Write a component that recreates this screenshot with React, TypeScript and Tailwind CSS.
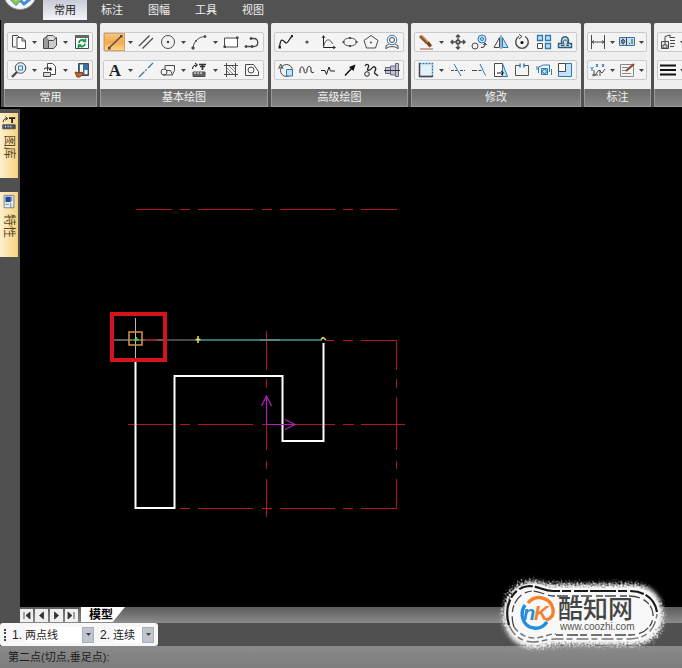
import React, { useState } from 'react';
import clsx from 'clsx';

interface Tool {
  name: string;
  art?: React.ReactNode;
  menu?: boolean;
  active?: boolean;
}

interface Group {
  title: string;
  width: string;
  rows: Tool[][];
}

const INK = '#4a4a4a';
const BLUE = '#2c7bb0';
const PALE = '#c4e2f3';

const tabs = ['常用', '标注', '图幅', '工具', '视图'];

const groups: Group[] = [
  {
    title: '常用',
    width: 'w-[93px]',
    rows: [
      [
        {
          name: '复制',
          menu: true,
          art: (
            <>
              <path d="M6 14H2.5V2.5h5l2 2" />
              <path d="M7 4.5h5l3.5 3.5v7.5H7z" fill="#fff" />
              <path d="M12 4.5V8h3.5" />
            </>
          ),
        },
        {
          name: '粘贴',
          menu: true,
          art: (
            <>
              <path d="M2.5 15.5V6l2-2h8v11.5z" fill="#999" />
              <path d="M6 4V2.5h6L14.5 5v8h-2" fill="#ddd" />
              <path d="M7.5 15.5v-8h5l3 -3v8l-3 3z" fill="#ccc" />
            </>
          ),
        },
        {
          name: '刷新',
          art: (
            <>
              <path d="M2.5 3.5h13v12h-13z" fill="#fff" />
              <path d="M2 3.5h14" strokeWidth="3" stroke="#666" />
              <path d="M6 10c0-3 4-4 6-2M12.5 5.5V8.5H9.5M12 10.5c0 3-4 4-6 2M5.5 15V12h3" stroke="#17984a" strokeWidth="1.6" />
            </>
          ),
        },
      ],
      [
        {
          name: '缩放',
          menu: true,
          art: (
            <>
              <circle cx="10.5" cy="7" r="5.3" fill="#e8eef2" />
              <path d="M8.5 5h4v4h-4z" stroke={BLUE} />
              <path d="M7 11l-5 5" strokeWidth="2.4" />
            </>
          ),
        },
        {
          name: '插入',
          menu: true,
          art: (
            <>
              <path d="M6.5 10V2.5h5l3 3v8H9" fill="#fff" />
              <path d="M2.5 11.5h7v4h-7z" fill="#ddd" />
              <path d="M3 8c2-1.5 5-1.5 7 0" stroke="#111" />
              <path d="M11 9.5l-3.5-.5 2.5-3z" fill="#111" stroke="none" />
            </>
          ),
        },
        {
          name: '格式刷',
          art: (
            <>
              <path d="M5.5 2.5h10v12h-10z" fill="#3b6fa5" />
              <path d="M7 3.5h3v8H7zM11.5 9h3v4h-3z" fill="#fff" stroke="none" />
              <path d="M2 11l4 1 3-1 1 2-3 3H4z" fill="#c8642a" stroke="#8b3d12" />
            </>
          ),
        },
      ],
    ],
  },
  {
    title: '基本绘图',
    width: 'w-[168px]',
    rows: [
      [
        {
          name: '直线',
          menu: true,
          active: true,
          art: (
            <>
              <path d="M3 15L15.5 3" strokeWidth="1.3" />
              <path d="M2 14h2.5v2.5H2zM14 2h2.5v2.5H14z" fill={INK} stroke="none" />
            </>
          ),
        },
        { name: '平行线', art: <path d="M2 13L12.5 2.5M5.5 15.5L16 5" strokeWidth="1.3" /> },
        {
          name: '圆',
          menu: true,
          art: (
            <>
              <circle cx="9" cy="9" r="6.5" />
              <circle cx="9" cy="9" r="1.3" fill={INK} stroke="none" />
            </>
          ),
        },
        {
          name: '圆弧',
          menu: true,
          art: (
            <>
              <path d="M3 15C3.5 9 8 4 15 3.5" />
              <circle cx="3" cy="15" r="1.2" fill={INK} />
              <circle cx="6" cy="8" r="1" fill={INK} stroke="none" />
              <circle cx="15" cy="3.5" r="1" fill={INK} />
            </>
          ),
        },
        {
          name: '矩形',
          art: (
            <>
              <path d="M2.5 5h13v9h-13z" fill="#fff" />
              <path d="M1.5 12.5H4V15H1.500zM14 3.500h2.500V6H14z" fill={INK} stroke="none" />
            </>
          ),
        },
        {
          name: '多段线',
          art: (
            <>
              <path d="M2 13.5h9c5 0 5-8 0-8H8" strokeWidth="1.3" />
              <circle cx="8" cy="5.5" r="1" fill={INK} />
              <circle cx="3" cy="13.5" r="1" fill={INK} />
              <circle cx="9" cy="13.5" r="1" fill={INK} />
            </>
          ),
        },
      ],
      [
        {
          name: '文字',
          menu: true,
          art: (
            <text x="9" y="15" fontSize="17" fontWeight="bold" fontFamily="Liberation Serif, serif" textAnchor="middle" fill="#222" stroke="none">
              A
            </text>
          ),
        },
        {
          name: '中心线',
          art: (
            <>
              <path d="M2 16l5.5-5.5M11 7l5-5" stroke={BLUE} strokeWidth="1.3" />
              <path d="M8.5 9.5l1-1" strokeWidth="1.5" />
            </>
          ),
        },
        {
          name: '图块',
          menu: true,
          art: (
            <>
              <path d="M6 8V4.5h9.500v5l-2 4" />
              <circle cx="5" cy="11" r="3" />
              <path d="M4 14h9.5L11.500 9.5H8" />
            </>
          ),
        },
        {
          name: '图库',
          menu: true,
          art: (
            <>
              <path d="M2.5 8c0-3 2-4 4-4M5 2l2.5 2L5 6" stroke="#111" />
              <path d="M9 3.5h7M10 5.5h5M12.5 3v6" stroke="#333" strokeWidth="1.6" />
              <path d="M3 11h12v4.5H3z" fill="#666" />
              <path d="M5 11v2M8 11v2M11 11v2" stroke="#fff" />
            </>
          ),
        },
        {
          name: '剖面线',
          art: (
            <>
              <path d="M4.5 2v14M13.5 2v14M2 4.5h14M2 13.5h14" />
              <path d="M5 7l6 6M5 10l3 3M7 5l6 6M10 5l3 3" stroke="#888" />
            </>
          ),
        },
        {
          name: '填充',
          art: (
            <>
              <path d="M2.5 14.5v-11h8l5 7v4z" fill="#f8f8f8" />
              <circle cx="8" cy="9" r="3" />
            </>
          ),
        },
      ],
    ],
  },
  {
    title: '高级绘图',
    width: 'w-[137px]',
    rows: [
      [
        {
          name: '样条',
          art: (
            <>
              <path d="M2.5 14C4 2 7 9 9 10s4-6 6-6.5" strokeWidth="1.3" stroke="#222" />
              <path d="M1.5 13H4v2.5H1.5zM14 2h2v2h-2z" fill="#222" stroke="none" />
            </>
          ),
        },
        { name: '点', art: <circle cx="9" cy="9" r="1.6" fill="#555" stroke="none" /> },
        {
          name: '公式曲线',
          art: (
            <>
              <path d="M4.5 3v11.5H16" stroke="#222" />
              <path d="M3 5l1.5-2.5L6 5M14 13l2.5 1.5L14 16M4.5 14c2-10 7-8 9-3" />
            </>
          ),
        },
        {
          name: '椭圆',
          art: (
            <>
              <ellipse cx="9" cy="9" rx="6.5" ry="4" />
              <path d="M8 4h2v2H8zM8 12h2v2H8zM1.5 8h2v2h-2zM14.5 8h2v2h-2z" fill={INK} stroke="none" />
            </>
          ),
        },
        {
          name: '正多边形',
          art: (
            <>
              <path d="M9 2.500l7 5L13.5 15h-9L2 7.500z" />
              <circle cx="9" cy="9.5" r="1" fill={INK} stroke="none" />
            </>
          ),
        },
        {
          name: '圆弧拟合',
          art: (
            <>
              <circle cx="9" cy="7" r="4.8" stroke={BLUE} />
              <circle cx="9" cy="7" r="2.5" />
              <path d="M3 16v-3.5c2 0 2-1.5 3-1.5M15 16v-3.5c-2 0-2-1.5-3-1.5M3 15.5c3-2.5 9-2.5 12 0" />
            </>
          ),
        },
      ],
      [
        {
          name: '局部放大',
          art: (
            <>
              <circle cx="9.5" cy="9.5" r="6" />
              <path d="M9.5 8.5h6v6.5h-6z" fill={PALE} stroke={BLUE} />
              <text x="1" y="8" fontSize="8" fontFamily="Liberation Sans, sans-serif" fill="#333" stroke="none">
                A
              </text>
            </>
          ),
        },
        { name: '波浪线', art: <path d="M2 12V9c0-4 4-4 4 0s3 4 3 0 4-5 4-1v2c0 2 2 2 3 1" stroke="#222" /> },
        { name: '双折线', art: <path d="M2 9.5h4l1.5 4L10 6l1.5 4H16" stroke="#222" /> },
        {
          name: '箭头',
          art: (
            <>
              <path d="M4 14.5L11 7" stroke="#111" strokeWidth="1.5" />
              <path d="M14.5 3.5L12.5 10 8 6z" fill="#111" stroke="none" />
            </>
          ),
        },
        {
          name: '齿形',
          art: (
            <>
              <path d="M3 5c2-3 5-1 3 2s2 3 4 0 5 0 3 3 2 3 3 5" stroke="#222" strokeWidth="1.3" />
              <circle cx="5" cy="13" r="2.3" stroke="#222" />
            </>
          ),
        },
        {
          name: '孔轴',
          art: (
            <>
              <path d="M2.5 6.5h5v6h-5zM7.5 5h5v9h-5zM12.5 2.5h3v13h-3z" fill="#bcc3d8" stroke="#667" />
              <path d="M1 9.5h16" stroke="#333" />
            </>
          ),
        },
      ],
    ],
  },
  {
    title: '修改',
    width: 'w-[170px]',
    rows: [
      [
        {
          name: '删除',
          menu: true,
          art: (
            <>
              <path d="M3 3l7 7" stroke="#8a5634" strokeWidth="3" />
              <path d="M5 2.5l7 7" stroke="#d49a66" strokeWidth="1.5" />
              <path d="M9 10.5l3-2 3 4-2.5 2z" fill="#7a4020" stroke="none" />
              <path d="M3 16h13" stroke="#a35b32" />
            </>
          ),
        },
        {
          name: '平移',
          art: <path d="M9 2v5M9 11v5M2 9h5M11 9h5M7 4l2-2 2 2M7 14l2 2 2-2M4 7L2 9l2 2M14 7l2 2-2 2M7.5 7.5h3v3h-3z" strokeWidth="1.4" />,
        },
        {
          name: '复制对象',
          art: (
            <>
              <circle cx="5" cy="13" r="3" />
              <circle cx="12" cy="6" r="4" stroke={BLUE} fill={PALE} />
              <circle cx="12" cy="6" r="1.5" stroke={BLUE} />
              <path d="M11 14.5c3 0 4-1 4-3.5M13.5 12l1.5-2 1.5 2" stroke="#222" />
            </>
          ),
        },
        {
          name: '镜像',
          art: (
            <>
              <path d="M2 14.5h5.5v-10z" />
              <path d="M16 14.5h-5.5v-10z" fill={PALE} stroke={BLUE} />
              <path d="M9 2v14" stroke={BLUE} />
            </>
          ),
        },
        {
          name: '旋转',
          art: (
            <>
              <path d="M6 3.5A6.3 6.3 0 1 0 12 3.5" strokeWidth="1.4" />
              <path d="M6 1.500l3 2-3 2.500" />
              <circle cx="9" cy="9.5" r="1.6" fill="#111" stroke="none" />
            </>
          ),
        },
        {
          name: '阵列',
          art: (
            <>
              <path d="M2.5 2.5h5v5h-5zM10.5 2.5h5v5h-5zM10.5 10.5h5v5h-5z" fill={PALE} stroke={BLUE} strokeWidth="1.3" />
              <path d="M2.5 10.5h5v5h-5z" fill="#fff" />
            </>
          ),
        },
        {
          name: '等距线',
          art: (
            <>
              <path d="M2.5 14.5v-4h3.5c-3-9 9-9 6 0h3.5v4z" fill={PALE} stroke="#285d80" strokeWidth="1.4" />
              <path d="M5 12.5h3c0-2-2-5 1-5.5s3 3 1.5 5.5H13" />
            </>
          ),
        },
      ],
      [
        {
          name: '选择',
          menu: true,
          art: (
            <>
              <path d="M2.5 2.5h13v13h-13z" stroke={BLUE} strokeDasharray="2 1" strokeWidth="1.4" fill="#e4f1f9" />
              <path d="M2.5 2v13.5H16" strokeWidth="1.4" />
            </>
          ),
        },
        {
          name: '裁剪',
          art: (
            <>
              <path d="M2 9.500h6M11 9.5h5" strokeDasharray="3 1" />
              <path d="M5 3l7 12" stroke={BLUE} />
            </>
          ),
        },
        {
          name: '延伸',
          art: (
            <>
              <path d="M2 9.5h5M8.5 9.5h3" />
              <path d="M10 3l5.5 11.5" stroke={BLUE} />
            </>
          ),
        },
        {
          name: '拉伸',
          art: (
            <>
              <path d="M2.5 2.5h8v13h-8z" fill="#fff" />
              <path d="M10.5 2.5l5 13h-5z" fill={PALE} stroke={BLUE} />
              <path d="M5 12h6M9 10l2.5 2L9 14" stroke="#111" />
            </>
          ),
        },
        {
          name: '打断',
          art: (
            <>
              <path d="M6.5 4.5h-4v10h13v-10h-4" stroke="#555" />
              <path d="M7 2.5v4M11 2.5v4" stroke={BLUE} strokeWidth="1.5" />
            </>
          ),
        },
        {
          name: '缩放对象',
          art: (
            <>
              <path d="M6.5 7.5h6v6h-6z" fill={PALE} stroke={BLUE} />
              <circle cx="9.5" cy="10.5" r="2" stroke={BLUE} />
              <path d="M3.5 12V6l5-2h6v7M2 9V5M16.5 14V8" stroke={BLUE} />
            </>
          ),
        },
        {
          name: '分解',
          art: (
            <>
              <path d="M2.5 2.5h13v13h-13z" fill={PALE} stroke={BLUE} />
              <path d="M2.5 2.5h7v8h-7z" fill="#fff" />
            </>
          ),
        },
      ],
    ],
  },
  {
    title: '标注',
    width: 'w-[67px]',
    rows: [
      [
        {
          name: '尺寸标注',
          menu: true,
          art: <path d="M2.5 2v14M15.5 2v14M3 9h12M5 7.5L3 9l2 1.5M13 7.5L15 9l-2 1.5" />,
        },
        {
          name: '形位公差',
          menu: true,
          art: (
            <>
              <path d="M1.5 4.5h15v8h-15z" fill={PALE} stroke="#466f96" />
              <circle cx="5" cy="8.5" r="1.8" stroke="#333" />
              <path d="M5 5.5v6M8.5 4.5v8M11 10.5h1M14 6v5" stroke="#346" />
            </>
          ),
        },
      ],
      [
        {
          name: '坐标标注',
          menu: true,
          art: (
            <>
              <path d="M5 9v6.5M3 14h6M6 14l4-5 3 3 3-4M11 9v6" />
              <path d="M1.5 6l1.5 2 1.5-2M3 8v2M7 3l2 3M9 3L7 6M13 3l2 3M15 3l-2 3" stroke={BLUE} />
            </>
          ),
        },
        {
          name: '技术要求',
          menu: true,
          art: (
            <>
              <path d="M2.5 3.5h13v12h-13z" fill="#f4f4f4" stroke="#888" />
              <path d="M4 6.5h6M4 9.5h4M4 12.5h9" stroke="#888" />
              <path d="M8 10l8-7" stroke="#8b4a35" strokeWidth="2.2" />
            </>
          ),
        },
      ],
    ],
  },
  {
    title: '',
    width: 'w-[67px]',
    rows: [
      [
        {
          name: '图层',
          menu: true,
          art: (
            <>
              <path d="M6 8V3.5l5-1.5v3M11 4.5h5M11 7.5h5M11 10.5h5M11 13.5h4" />
              <path d="M2.5 8.5h7v7h-7z" fill="#e6e6e6" />
              <path d="M6 8v4M4 12h4v3H4z" />
            </>
          ),
        },
        { name: '', menu: true },
      ],
      [
        { name: '线宽', menu: true, art: <path d="M1 4.5h16M1 9h16M1 13.5h16" stroke="#111" strokeWidth="2" /> },
        { name: '', menu: true },
      ],
    ],
  },
];

function Glyph({ children, size = 18 }: { children: React.ReactNode; size?: number }) {
  return (
    <svg width={size} height={size} viewBox="0 0 18 18" fill="none" stroke={INK} className="shrink-0" aria-hidden="true">
      {children}
    </svg>
  );
}

function Caret() {
  return (
    <svg width="5" height="3" viewBox="0 0 5 3" className="shrink-0" aria-hidden="true">
      <path d="M0 0h5L2.5 3z" fill="#444" />
    </svg>
  );
}

function ToolRow({ tools }: { tools: Tool[] }) {
  return (
    <div className="flex h-5 items-stretch rounded-[2px] border border-[#c9cacb] bg-[#f4f4f4]">
      {tools.map((tool, i) => (
        <React.Fragment key={i}>
          <button
            type="button"
            aria-label={tool.name || undefined}
            className={clsx(
              'flex min-w-0 flex-[2] items-center justify-center',
              tool.active && 'bg-gradient-to-b from-[#f7c98a] via-[#f6a94a] to-[#ffd98c] ring-1 ring-inset ring-[#d9a35c]'
            )}
          >
            {tool.art && <Glyph>{tool.art}</Glyph>}
          </button>
          {tool.menu && (
            <button type="button" aria-label={`${tool.name} ▾`} className="flex min-w-0 flex-1 items-center justify-center">
              <Caret />
            </button>
          )}
        </React.Fragment>
      ))}
    </div>
  );
}

function RibbonGroup({ group }: { group: Group }) {
  return (
    <section className={clsx('flex shrink-0 flex-col overflow-hidden rounded-[2px] bg-[#efefef]', group.width)}>
      <div className="flex flex-col gap-2 py-[9px] pr-1 pl-[3px]">
        {group.rows.map((row, i) => (
          <ToolRow key={i} tools={row} />
        ))}
      </div>
      <h2 className="h-[18px] border border-t-0 border-[#9a9a9a] bg-gradient-to-b from-[#6c6c6c] to-[#858585] text-center text-[11px] leading-4 text-[#f2f2f2]">
        {group.title}
      </h2>
    </section>
  );
}

function Ribbon() {
  const [current, setCurrent] = useState('常用');

  return (
    <header className="bg-[#525252]">
      <div className="flex h-5 items-stretch">
        <button type="button" aria-label="菜单" className="w-[43px]">
          <svg width="43" height="20" viewBox="0 0 43 20" fill="none" aria-hidden="true">
            <circle cx="20" cy="-7" r="16.5" fill="#f3f5f6" stroke="#8c8c8c" />
            <path d="M11-1l5 5 4-4 4 4 6-5" stroke="#3f8fd6" strokeWidth="3" />
            <path d="M11-2l5 5 4-4" stroke="#8fc63f" strokeWidth="3" />
          </svg>
        </button>
        <nav className="flex gap-[3px]">
          {tabs.map(tab => (
            <button
              key={tab}
              type="button"
              onClick={() => setCurrent(tab)}
              className={clsx(
                'w-11 text-[11px] leading-5',
                tab === current ? 'bg-gradient-to-b from-[#c9ccd8] to-[#f4f5fb] text-[#222]' : 'text-[#f0f0f0]'
              )}
            >
              {tab}
            </button>
          ))}
        </nav>
      </div>
      <div className="flex gap-[3px] overflow-hidden border-l border-black pt-[3px] pl-[3px]">
        {groups.map((group, i) => (
          <RibbonGroup key={i} group={group} />
        ))}
      </div>
    </header>
  );
}

function DockTab({ label, children }: { label: string; children: React.ReactNode }) {
  return (
    <button
      type="button"
      className="flex h-[65px] w-[18px] flex-col items-center gap-1 bg-gradient-to-r from-[#fdf0cf] to-[#f7d47c] pt-[2px] text-[12px] leading-4 text-[#5a4a28]"
    >
      <Glyph size={16}>{children}</Glyph>
      <span className="[text-orientation:sideways] [writing-mode:vertical-rl]">{label}</span>
    </button>
  );
}

function Drawing() {
  return (
    <svg width="662" height="500" viewBox="20 107 662 500" fill="none" className="block shrink-0" aria-hidden="true">
      {/* 中心线与辅助线 */}
      <g stroke="#b5152a">
        <path d="M136 209.5H172M180 209.5H190M198 209.5H253M262 209.5H272M280 209.5H335M343 209.5H353M361 209.5H397" />
        <path d="M326 340.5H334M343 340.5H353M361 340.5H397" />
        <path d="M128 424.5H172M180 424.5H190M198 424.5H253M262 424.5H335M343 424.5H354M361 424.5H405" />
        <path d="M180 508.5H190M198 508.5H253M262 508.5H272M280 508.5H335M343 508.5H353M361 508.5H397" />
        <path d="M266.5 331V370M266.5 379V388M266.5 397V450M266.5 461V469M266.5 479V517" />
        <path d="M396.5 340V370M396.5 379V388M396.5 397V450M396.5 461V469M396.5 479V509" />
      </g>

      <path d="M135.5 361V508H174.5V376H282.5V441H323.5V343" stroke="#fff" strokeWidth="2" />
      <path d="M197 340H322" stroke="#2f7577" strokeWidth="2" />
      <path d="M167 340H197M260 340H280" stroke="#819192" />

      {/* 坐标系 */}
      <path d="M266.5 424V397M261.5 406l5-10 5 10M267 424.5h27M285 419.5l10 5-10 5" stroke="#b11fb8" strokeWidth="1.2" />

      {/* 捕捉点 */}
      <path d="M198 336v7M195.5 339.5h5M321 339.500l2-2 3 2.500" stroke="#e6de5c" strokeWidth="1.5" />

      {/* 十字光标 */}
      <path d="M135.5 318V361M113 340H167" stroke="#b9b9b9" />
      <path d="M145 340h12" stroke="#8e2020" strokeWidth="2" />
      <rect x="129" y="332" width="13" height="13" stroke="#dc9440" strokeWidth="1.5" />
      <path d="M134 339.5h5M136.5 337v4" stroke="#5cc04c" strokeWidth="1.3" />
      <rect x="112" y="314" width="53" height="46" stroke="#d3141a" strokeWidth="4" />
    </svg>
  );
}

function OptionSelect({ index, value, width }: { index: number; value: string; width: string }) {
  return (
    <div className="flex items-center gap-[3px]">
      <label htmlFor={`option-${index}`} className="text-[12px] leading-4 text-[#222]">
        {index}.
      </label>
      <div className={clsx('relative', width)}>
        <select id={`option-${index}`} defaultValue={value} className="block h-4 w-full appearance-none bg-white text-[11px] leading-4 text-[#222]">
          <option>{value}</option>
        </select>
        <span className="pointer-events-none absolute top-0 right-0 flex h-4 w-3 items-center justify-center border border-[#a9afb8] bg-[#c0c5cd]">
          <Caret />
        </span>
      </div>
    </div>
  );
}

const steps = [
  { name: '第一页', d: 'M3 2v7M9 2v7L5 5.5z' },
  { name: '上一页', d: 'M7.5 2v7l-4-3.5z' },
  { name: '下一页', d: 'M3.5 2v7l4-3.5z' },
  { name: '最后一页', d: 'M2 2v7l4-3.5zM8 2v7' },
];

function SheetBar() {
  return (
    <div className="flex h-4 items-start bg-gradient-to-b from-[#5c5c5c] to-[#8c8c8c]">
      <div className="flex gap-[2px] pt-[2px]">
        {steps.map(step => (
          <button key={step.name} type="button" aria-label={step.name} className="flex h-[13px] w-[13px] items-center justify-center bg-[#efefef]">
            <svg width="11" height="11" viewBox="0 0 11 11" fill="#333" stroke="#333" aria-hidden="true">
              <path d={step.d} strokeWidth="0.8" />
            </svg>
          </button>
        ))}
      </div>
      <button
        type="button"
        className="ml-[3px] h-[15px] w-11 bg-white pl-2 text-left text-[12px] leading-4 font-bold text-black [clip-path:polygon(0_0,100%_0,72%_100%,0_100%)]"
      >
        模型
      </button>
    </div>
  );
}

function Badge() {
  return (
    <div className="pointer-events-none absolute right-[7px] bottom-[13px]">
      <svg width="180" height="80" viewBox="0 0 180 80" fill="none">
        <defs>
          <filter id="rough" x="-10%" y="-20%" width="120%" height="140%">
            <feGaussianBlur in="SourceGraphic" stdDeviation="2" result="soft" />
            <feTurbulence type="fractalNoise" baseFrequency="0.5" numOctaves="2" seed="4" result="noise" />
            <feDisplacementMap in="soft" in2="noise" scale="9" />
          </filter>
        </defs>
        <path d="M38 6c6 0 10 3 18 3h80c20 0 32 12 32 31s-10 28-28 30H62c-8 0-14 3-22 3C20 73 8 58 8 40S20 6 38 6z" fill="#f6f6f6" filter="url(#rough)" />
        <path d="M38 9c8 0 12 4 20 4h78c18 0 28 10 28 26s-10 27-26 27H60c-8 0-12 3-20 3C23 69 12 56 12 39S22 9 38 9z" fill="#f8f8f8" />
        <path d="M14 50C8 30 18 12 34 11c10 0 14 5 24 5h76c16 0 26 8 28 21" stroke="#191919" strokeWidth="2.2" strokeDasharray="26 2 9 3 14 2" />
        <path d="M14 50c4 10 12 17 24 17 8 0 14-3 22-3h74c16 0 26-8 28-25" stroke="#777" strokeWidth="1.5" strokeDasharray="12 3 6 4" />
        <path d="M19 52C13 34 22 17 37 16c8 0 14 5 22 5h74c14 0 24 7 25 18s-8 21-23 21H60" stroke="#444" strokeWidth="1.3" strokeDasharray="11 4 7 2" />
        <path d="M19 52c5 7 12 11 20 11 8 0 14-4 22-4" stroke="#777" strokeWidth="1.5" strokeDasharray="6 3" />
        <path d="M33 28C41 18 56 23 58 34c1 6-2 10-7 11" stroke="#f5802d" strokeWidth="3.4" />
        <path d="M30 30c-6 9-2 22 9 23 6 1 10-2 13-6" stroke="#238de0" strokeWidth="3.4" />
        <g fontFamily="Liberation Sans, sans-serif" fontStyle="italic" fontWeight="bold" fontSize="20">
          <text x="28" y="45" fill="#238de0">
            n
          </text>
          <text x="39" y="45" fill="#f5802d">
            K
          </text>
        </g>
        <text x="63" y="43" fontSize="25" fontWeight="500" fontFamily="Liberation Sans, Noto Sans CJK SC, sans-serif" fill="#444">
          酷知网
        </text>
        <text x="65" y="55" fontSize="10" fontFamily="Liberation Sans, sans-serif" fill="#555">
          www.coozhi.com
        </text>
      </svg>
    </div>
  );
}

export default function App() {
  return (
    <div className="relative flex min-h-screen w-full flex-col overflow-hidden bg-[#505050] font-['Liberation_Sans','Noto_Sans_CJK_SC',sans-serif]">
      <Ribbon />

      <div className="flex flex-1">
        <aside className="flex w-5 shrink-0 flex-col gap-[14px] border-t-2 border-black bg-[#505050] pt-1">
          <DockTab label="图库">
            <path d="M2.5 8c0-3 2-4 4-4M5 2l2.5 2L5 6" stroke="#111" />
            <path d="M9 3.5h7M12.5 3v6" stroke="#222" strokeWidth="2" />
            <path d="M2 11h14v4.5H2z" fill="#456" />
            <path d="M5 12v2M8 12v2M11 12v2" stroke="#fff" />
          </DockTab>
          <DockTab label="特性">
            <path d="M3.5 1.5h11v14h-11z" fill="#e8eef5" stroke="#68798c" />
            <path d="M5 3h6v6H5z" fill="#1d4b9c" stroke="none" />
            <path d="M5 11.5h4M11 10v5M12 3v5" stroke="#678" />
          </DockTab>
        </aside>
        <main className="flex min-w-0 flex-1 flex-col">
          <div className="flex-1 overflow-hidden bg-black">
            <Drawing />
          </div>
          <SheetBar />
        </main>
      </div>

      <div className="flex h-[23px]">
        <div className="flex items-center gap-[6px] rounded-[3px] bg-[#f7f7f7] pr-1 pl-1">
          <span className="h-3 border-l-2 border-dotted border-[#444]" />
          <OptionSelect index={1} value="两点线" width="w-[69px]" />
          <OptionSelect index={2} value="连续" width="w-[41px]" />
        </div>
      </div>

      <footer className="h-[22px] bg-gradient-to-b from-[#8a8a8a] to-[#7c7c7c] pl-2 text-[11px] leading-[22px] text-[#1c1c1c]">
        第二点(切点,垂足点):
      </footer>

      <Badge />
    </div>
  );
}
